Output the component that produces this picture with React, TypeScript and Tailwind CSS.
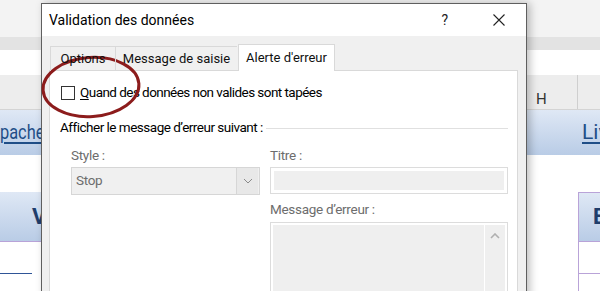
import React from "react";

function Chevron() {
  return (
    <svg width="10" height="6" viewBox="0 0 10 6" className="block">
      <path d="M1 1 L5 5 L9 1" fill="none" stroke="#8a8a8a" strokeWidth="1" />
    </svg>
  );
}

export default function App() {
  return (
    <div className="relative w-[600px] h-[291px] overflow-hidden bg-white font-['Roboto',sans-serif]">
      {/* Spreadsheet background */}
      <div className="flex flex-col w-full h-full">
        <div className="h-[37px] bg-[#f3f3f3]" />
        <div className="h-[13px] bg-[#e3e3e3]" />
        <div className="h-[25px] bg-white" />
        <div className="h-[35px] bg-[#ededed] border-b border-[#d4d4d4] flex">
          <div className="w-[41px]" />
          <div className="w-[486px]" />
          <div className="w-[51px] flex items-end justify-start pl-[9px] pb-[2px] text-[15px] leading-none text-[#333] border-r border-[#cfcfcf]">H</div>
          <div className="flex-1" />
        </div>
        <div className="h-[45px] flex bg-gradient-to-b from-[#dfe8f5] to-[#b9cce6]">
          <div className="w-[41px] flex items-center justify-start">
            <span className="inline-block origin-left scale-x-[0.78] text-[21px] leading-none text-[#1f4e87] underline underline-offset-[3px] whitespace-nowrap">pache</span>
          </div>
          <div className="w-[486px]" />
          <div className="flex-1 flex items-center pl-[55px] overflow-hidden">
            <span className="text-[21px] leading-none text-[#1f4e87] underline underline-offset-[3px] whitespace-nowrap">Livraison</span>
          </div>
        </div>
        <div className="h-[37px] bg-white" />
        <div className="h-[50px] flex">
          <div className="w-[41px] bg-gradient-to-b from-[#dfe8f5] to-[#b9cce6] border-b border-[#b9a3d8] flex items-center justify-start">
            <span className="ml-[32px] text-[22px] font-bold leading-none text-[#1f3d6b]">V</span>
          </div>
          <div className="w-[486px]" />
          <div className="w-[51px]" />
          <div className="flex-1 border-l border-t border-[#b9a3d8] border-b bg-gradient-to-b from-[#dfe8f5] to-[#b9cce6] flex items-center pl-[14px] overflow-hidden">
            <span className="text-[22px] font-bold leading-none text-[#1f3d6b]">E</span>
          </div>
        </div>
        <div className="flex-1 flex">
          <div className="w-[41px] flex flex-col">
            <div className="h-[31px]" />
            <div className="w-[32px] border-t border-[#2f5597]" />
          </div>
          <div className="w-[486px]" />
          <div className="w-[51px]" />
          <div className="flex-1 border-l border-[#b9a3d8] flex flex-col">
            <div className="h-[31px]" />
            <div className="border-t border-[#b9a3d8]" />
          </div>
        </div>
      </div>

      {/* Dialog window */}
      <div className="absolute left-[41px] top-[3px] w-[486px] h-[300px] border border-[#5f5f5f] bg-[#f0f0f0] flex flex-col shadow-[3px_0_8px_rgba(0,0,0,0.25)]">
        <div className="h-[32px] bg-white flex items-center pl-[7px] pr-[21px] shrink-0">
          <span className="text-[14px] text-black leading-none">Validation des données</span>
          <span className="ml-auto text-[14px] text-[#222] leading-none">?</span>
          <svg width="12" height="12" viewBox="0 0 12 12" className="ml-[45px]">
            <path d="M0.5 0.5 L11.5 11.5 M11.5 0.5 L0.5 11.5" stroke="#222" strokeWidth="1.1" />
          </svg>
        </div>
        <div className="flex-1 flex flex-col pl-[7px] pr-[8px] pt-[8px]">
          <div className="flex items-end h-[27px] pl-[1px] relative z-10 -mb-px">
            <div className="h-[25px] w-[65px] flex items-center justify-center border-t border-l border-[#d9d9d9] text-[13px] text-[#111]">Options</div>
            <div className="h-[25px] w-[122px] flex items-center justify-center border-t border-l border-[#d9d9d9] text-[13px] text-[#111]">Message de saisie</div>
            <div className="h-[27px] w-[97px] ml-[1px] flex items-center justify-center bg-white border-t border-l border-r border-[#d9d9d9] text-[13px] text-[#111]">Alerte d'erreur</div>
          </div>
          <div className="flex-1 bg-white border border-[#d9d9d9] flex flex-col">
            <div className="flex items-center pl-[11px] mt-[15px] h-[14px]">
              <div className="w-[14px] h-[14px] border border-[#333] bg-white" />
              <span className="ml-[5px] text-[13.5px] tracking-[-0.55px] text-black leading-none whitespace-nowrap">
                <span className="underline underline-offset-2">Q</span>uand des données non valides sont tapées
              </span>
            </div>
            <div className="flex items-center pl-[10px] mt-[20px] h-[16px] pr-[9px]">
              <span className="text-[13.5px] tracking-[-0.5px] text-black leading-none whitespace-nowrap">Afficher le message d’erreur suivant :</span>
              <div className="flex-1 ml-[3px] border-t border-[#e0e0e0]" />
            </div>
            <div className="flex pl-[21px] pr-[9px] mt-[12px]">
              <div className="w-[189px] flex flex-col">
                <span className="h-[16px] flex items-center text-[13.5px] tracking-[-0.3px] text-[#6d6d6d] leading-none">Style :</span>
                <div className="mt-[3px] h-[28px] border border-[#d6d6d6] bg-[#f0f0f0] flex items-center">
                  <span className="pl-[4px] text-[13.5px] tracking-[-0.3px] text-[#6d6d6d] leading-none flex-1">Stop</span>
                  <div className="w-[22px] h-[26px] mr-[1px] border-l border-[#d6d6d6] bg-[#e8e8e8] flex items-center justify-center">
                    <Chevron />
                  </div>
                </div>
              </div>
              <div className="ml-[10px] flex-1 flex flex-col">
                <span className="h-[16px] flex items-center text-[13.5px] tracking-[-0.3px] text-[#6d6d6d] leading-none">Titre :</span>
                <div className="mt-[3px] h-[27px] border border-[#dcdcdc] p-[3px] bg-white">
                  <div className="w-full h-full bg-[#efefef]" />
                </div>
                <span className="mt-[8px] h-[16px] flex items-center text-[13.5px] tracking-[-0.3px] text-[#6d6d6d] leading-none">Message d’erreur :</span>
                <div className="mt-[4px] h-[90px] border border-[#dcdcdc] p-[2px] bg-white flex">
                  <div className="flex-1 bg-[#efefef]" />
                  <div className="w-[20px] ml-[1px] bg-[#efefef] flex justify-center pt-[8px]">
                    <svg width="10" height="6" viewBox="0 0 10 6">
                      <path d="M1 5 L5 1 L9 5" fill="none" stroke="#b0b0b0" strokeWidth="1.6" />
                    </svg>
                  </div>
                </div>
              </div>
            </div>
          </div>
        </div>
      </div>

      {/* Red hand-drawn circle */}
      <svg className="absolute left-0 top-0 pointer-events-none" width="600" height="291">
        <ellipse cx="91" cy="87" rx="48" ry="29.5" transform="rotate(-4 91 87)" fill="none" stroke="#8c1c1c" strokeWidth="3" />
      </svg>
    </div>
  );
}
